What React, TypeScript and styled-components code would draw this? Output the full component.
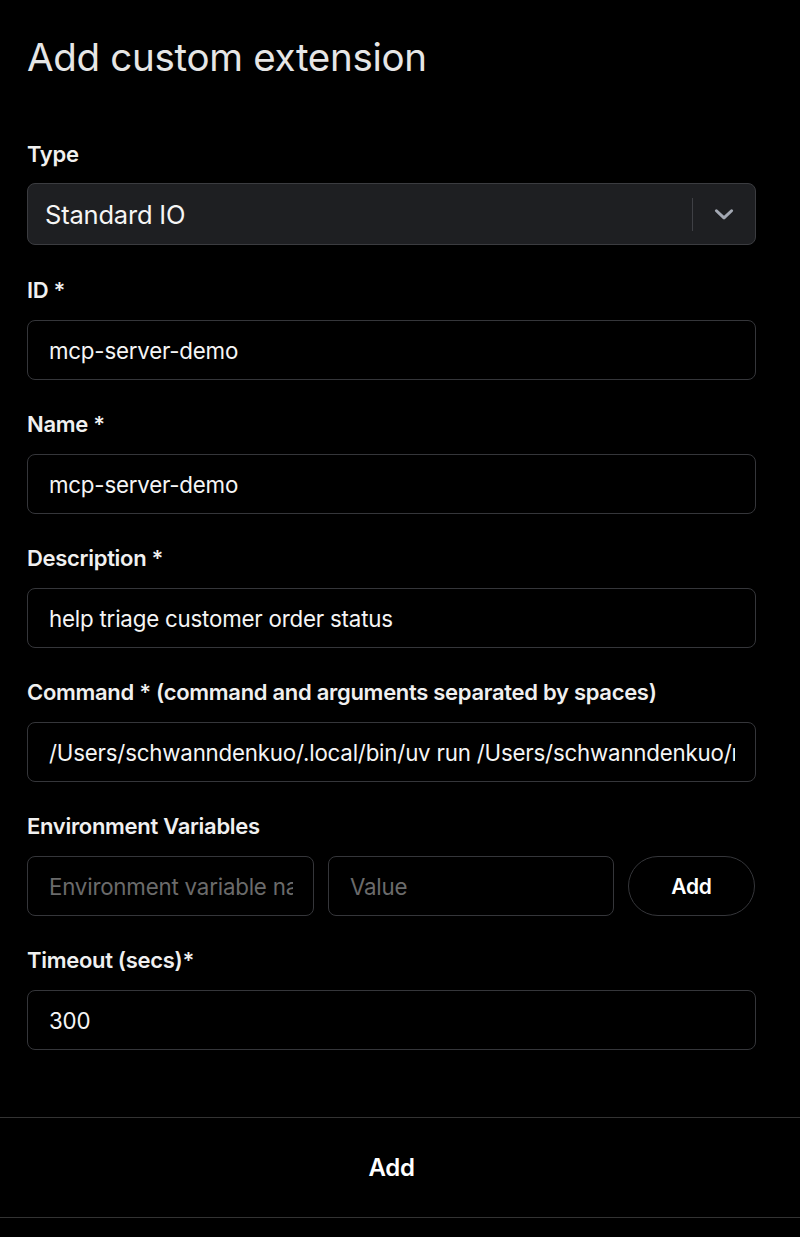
import React from "react";
import styled, { createGlobalStyle } from "styled-components";

const Global = createGlobalStyle`
  html, body { margin: 0; padding: 0; background: #000; }
  body { font-family: Inter, "Noto Sans", sans-serif; color: #f2f2f2; }
  * { box-sizing: border-box; }
`;

const Page = styled.div`
  width: 800px;
  min-height: 1237px;
  background: #000;
  display: flex;
  flex-direction: column;
`;

const Body = styled.div`
  padding: 33px 44px 0 27px;
  display: flex;
  flex-direction: column;
`;

const Title = styled.h1`
  margin: 0 0 59px 0;
  font-size: 38.5px;
  line-height: 48px;
  font-weight: 400;
  color: #e6e6e6;
  letter-spacing: -0.3px;
`;

const Field = styled.div<{ $gap?: number; $after?: number }>`
  display: flex;
  flex-direction: column;
  gap: ${(p) => p.$gap ?? 16}px;
  margin-bottom: ${(p) => p.$after ?? 30}px;
`;

const Label = styled.label`
  font-size: 22px;
  line-height: 28px;
  font-weight: 600;
  color: #f0f0f0;
  letter-spacing: -0.3px;
`;

const Select = styled.div`
  height: 62px;
  border: 1px solid #3b3c40;
  background: #1e1f22;
  border-radius: 8px;
  display: flex;
  align-items: center;
  padding-left: 17px;
`;

const SelectValue = styled.span`
  flex: 1;
  font-size: 25.5px;
  color: #f5f5f5;
  letter-spacing: -0.2px;
`;

const Separator = styled.span`
  width: 1px;
  height: 33px;
  background: #3f4045;
`;

const Chevron = styled.span`
  width: 62px;
  display: flex;
  align-items: center;
  justify-content: center;
`;

const Input = styled.input`
  height: 60px;
  width: 100%;
  min-width: 0;
  border: 1px solid #35363a;
  border-radius: 8px;
  background: #000;
  padding: 0 20px 0 21px;
  font-family: inherit;
  font-size: 22.3px;
  color: #f5f5f5;
  letter-spacing: -0.2px;
  outline: none;
  &::placeholder {
    color: #6b6b6b;
  }
`;

const EnvRow = styled.div`
  display: grid;
  grid-template-columns: 287px 286px 127px;
  gap: 14px;
`;

const PillButton = styled.button`
  height: 60px;
  border: 1px solid #35363a;
  border-radius: 30px;
  background: #000;
  color: #fff;
  font-family: inherit;
  font-size: 21px;
  font-weight: 600;
  letter-spacing: -0.3px;
`;

const Footer = styled.div`
  margin-top: 67px;
  border-top: 1px solid #333;
  border-bottom: 1px solid #333;
  height: 101px;
  padding: 0 44px 0 27px;
  display: flex;
  align-items: center;
  justify-content: center;
`;

const FooterButton = styled.button`
  background: none;
  border: none;
  color: #fff;
  font-family: inherit;
  font-size: 24px;
  font-weight: 600;
  letter-spacing: -0.3px;
  padding: 0;
`;

export default function App() {
  return (
    <Page>
      <Global />
      <Body>
        <Title>Add custom extension</Title>
        <Field $gap={15} $after={31}>
          <Label>Type</Label>
          <Select>
            <SelectValue>Standard IO</SelectValue>
            <Separator />
            <Chevron>
              <svg width="26" height="26" viewBox="0 0 24 24" fill="none" stroke="#a3a8b3" strokeWidth="2.8" strokeLinecap="round" strokeLinejoin="round">
                <path d="M5 9l7 6.5 7-6.5" />
              </svg>
            </Chevron>
          </Select>
        </Field>
        <Field>
          <Label>ID *</Label>
          <Input readOnly value="mcp-server-demo" />
        </Field>
        <Field>
          <Label>Name *</Label>
          <Input readOnly value="mcp-server-demo" />
        </Field>
        <Field>
          <Label>Description *</Label>
          <Input readOnly value="help triage customer order status" />
        </Field>
        <Field>
          <Label>Command * (command and arguments separated by spaces)</Label>
          <Input readOnly value="/Users/schwanndenkuo/.local/bin/uv run /Users/schwanndenkuo/mcp-server-demo/main.py" />
        </Field>
        <Field>
          <Label>Environment Variables</Label>
          <EnvRow>
            <Input placeholder="Environment variable name" />
            <Input placeholder="Value" />
            <PillButton>Add</PillButton>
          </EnvRow>
        </Field>
        <Field $after={0}>
          <Label>Timeout (secs)*</Label>
          <Input readOnly value="300" />
        </Field>
      </Body>
      <Footer>
        <FooterButton>Add</FooterButton>
      </Footer>
    </Page>
  );
}
